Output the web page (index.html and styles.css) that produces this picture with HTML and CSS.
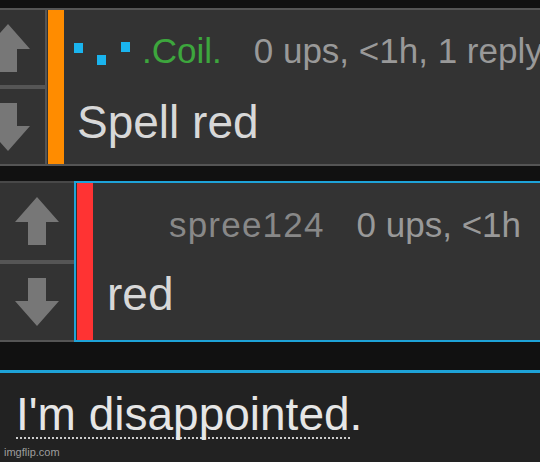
FILE: index.html
```html
<!DOCTYPE html>
<html lang="en">
<head>
  <meta charset="UTF-8" />
  <meta name="viewport" content="width=device-width, initial-scale=1.0">
  <title>Comments</title>
  <link rel="stylesheet" href="styles.css">
</head>
<body>
  <div class="thread">
    <div class="comment">
      <div class="votes">
        <button class="vote">
          <svg class="arrow" viewBox="0 0 44 48" width="44" height="48"><polygon points="22,0 44,25 31,25 31,48 13,48 13,25 0,25"/></svg>
        </button>
        <div class="vote-sep"></div>
        <button class="vote">
          <svg class="arrow" viewBox="0 0 44 48" width="44" height="48"><polygon points="13,0 31,0 31,23 44,23 22,48 0,23 13,23"/></svg>
        </button>
      </div>
      <div class="main">
        <div class="bar bar-orange"></div>
        <div class="comment-body">
          <div class="comment-head">
            <svg class="flair" viewBox="0 0 56 23" width="56" height="23"><rect x="0" y="1" width="9" height="10"/><rect x="23" y="13" width="9" height="10"/><rect x="47" y="0" width="9" height="10"/></svg><span class="user user-green">.Coil.</span><span class="meta">0 ups, &lt;1h, 1 reply</span>
          </div>
          <div class="comment-text">Spell red</div>
        </div>
      </div>
    </div>

    <div class="comment reply">
      <div class="votes">
        <button class="vote">
          <svg class="arrow" viewBox="0 0 44 48" width="44" height="48"><polygon points="22,0 44,25 31,25 31,48 13,48 13,25 0,25"/></svg>
        </button>
        <div class="vote-sep"></div>
        <button class="vote">
          <svg class="arrow" viewBox="0 0 44 48" width="44" height="48"><polygon points="13,0 31,0 31,23 44,23 22,48 0,23 13,23"/></svg>
        </button>
      </div>
      <div class="main">
        <div class="bar bar-red"></div>
        <div class="comment-body">
          <div class="comment-head">
            <span class="user user-gray">spree124</span><span class="meta">0 ups, &lt;1h</span>
          </div>
          <div class="comment-text">red</div>
        </div>
      </div>
    </div>

    <div class="compose">
      <div class="compose-text"><span class="misspelled">I'm disappointed</span>.</div>
    </div>
  </div>
  <div class="watermark">imgflip.com</div>
</body>
</html>
```

FILE: styles.css
```css
html, body {
  margin: 0;
  height: 100%;
}
body {
  background: #111;
  font-family: "Liberation Sans", Arial, sans-serif;
  overflow: hidden;
  position: relative;
}
.thread {
  padding-top: 8px;
  display: flex;
  flex-direction: column;
  height: 100%;
  box-sizing: border-box;
}
.comment {
  display: flex;
  height: 158px;
  box-sizing: border-box;
  margin-left: -30px;
  margin-right: -20px;
  background: #333;
  border-top: 2px solid #555;
  border-bottom: 2px solid #555;
}
.votes {
  width: 75px;
  flex-shrink: 0;
  display: flex;
  flex-direction: column;
  border-right: 2px solid #555;
}
.vote {
  flex: 1;
  display: flex;
  align-items: center;
  justify-content: center;
  padding: 0;
  background: #333;
  border: none;
}
.arrow {
  fill: #777;
}
.vote-sep {
  height: 4px;
  background: #555;
}
.main {
  flex: 1;
  display: flex;
}
.bar {
  width: 16px;
  margin-left: 1px;
}
.bar-orange {
  background: #ff8c00;
}
.bar-red {
  background: #f33;
}
.comment-body {
  flex: 1;
  padding: 21px 0 0 10px;
}
.comment-head {
  font-size: 35px;
  line-height: 40px;
  white-space: nowrap;
}
.flair {
  fill: #1ab4ee;
  margin-right: 12px;
  vertical-align: -2px;
}
.user-green {
  color: #3da63d;
}
.user-gray {
  color: #888;
  margin-left: 64px;
  letter-spacing: 1.2px;
}
.meta {
  color: #999;
  margin-left: 32px;
}
.comment-text {
  font-size: 46px;
  line-height: 50px;
  color: #d8d8d8;
  margin-top: 26px;
  padding-left: 3px;
}

.reply {
  margin-top: 15px;
  margin-left: 0;
  height: 161px;
  border: none;
  background: transparent;
}
.reply .votes {
  width: 74px;
  border-right: none;
  border-top: 2px solid #484848;
  border-bottom: 2px solid #555;
}
.reply .main {
  background: #333;
  border: 2px solid #1ea3d8;
}
.reply .comment-body {
  padding-left: 12px;
  padding-top: 22px;
}
.reply .comment-text {
  margin-top: 24px;
  padding-left: 2px;
}

.compose {
  flex: 1;
  margin-top: 28px;
  background: #222;
  border-top: 3px solid #1ea3d8;
  padding: 15px 0 0 16px;
}
.compose-text {
  font-size: 46px;
  line-height: 52px;
  color: #e6e6e6;
  white-space: nowrap;
}
.misspelled {
  display: inline-block;
  line-height: 46px;
  border-bottom: 2px dotted #ccc;
}
.watermark {
  position: absolute;
  left: 4px;
  bottom: 4px;
  font-size: 11px;
  color: rgba(200, 200, 200, 0.75);
}
```
